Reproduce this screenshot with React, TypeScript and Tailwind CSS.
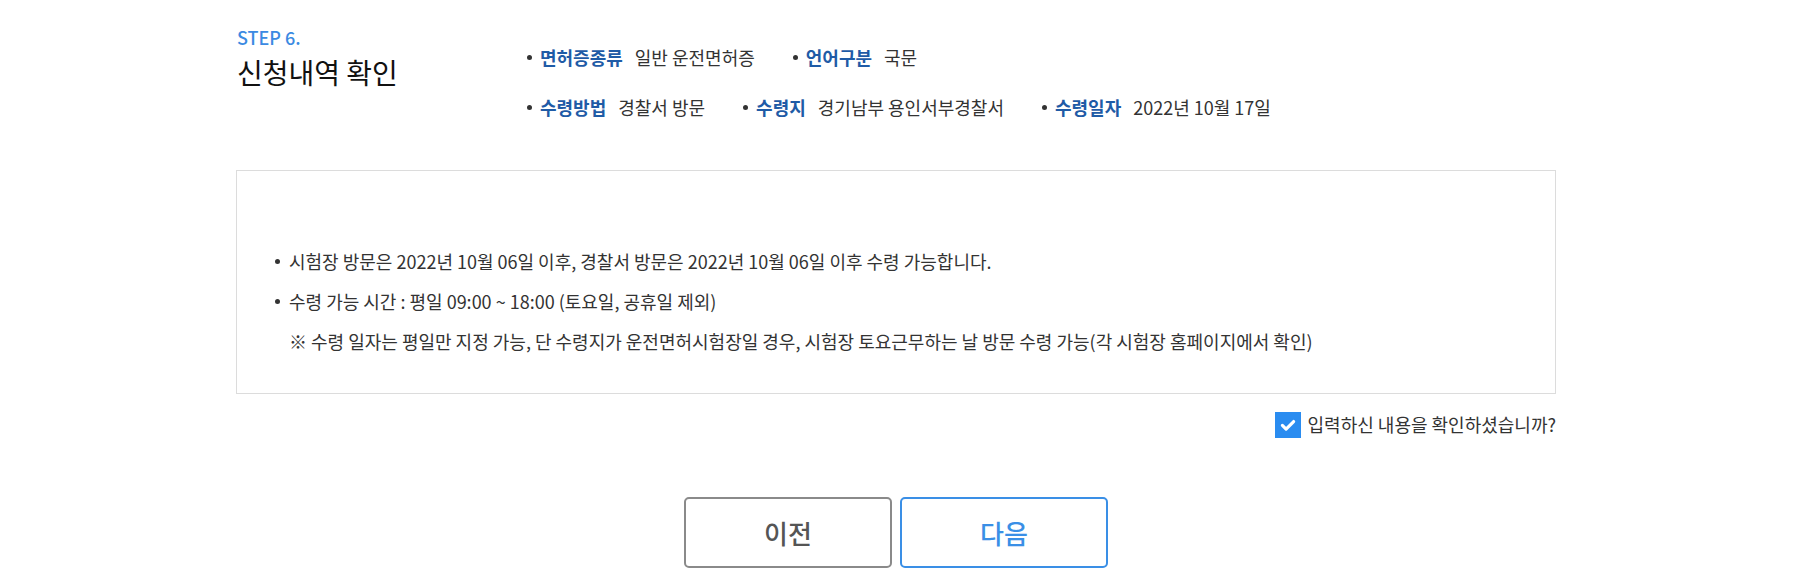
import React from 'react';

interface InfoItem {
  label: string;
  value: string;
}

const rowOne: InfoItem[] = [
  { label: '면허증종류', value: '일반 운전면허증' },
  { label: '언어구분', value: '국문' },
];

const rowTwo: InfoItem[] = [
  { label: '수령방법', value: '경찰서 방문' },
  { label: '수령지', value: '경기남부 용인서부경찰서' },
  { label: '수령일자', value: '2022년 10월 17일' },
];

const InfoRow: React.FC<{ items: InfoItem[] }> = ({ items }) => (
  <div className="flex items-center gap-[38px] h-[24px]">
    {items.map((item) => (
      <div key={item.label} className="flex items-center">
        <span className="w-[5px] h-[5px] rounded-full bg-[#333] mr-[8px]" aria-hidden="true" />
        <span className="font-bold text-[#1f5ba6] mr-[12px]">{item.label}</span>
        <span className="text-[#333]">{item.value}</span>
      </div>
    ))}
  </div>
);

const Dot: React.FC = () => (
  <span className="w-[5px] h-[5px] rounded-full bg-[#333] mr-[9px] flex-shrink-0" aria-hidden="true" />
);

export default function App() {
  return (
    <div
      className="w-full min-h-[585px] bg-white text-[18px]"
      style={{ fontFamily: '"Noto Sans CJK KR", "Noto Sans", sans-serif' }}
    >
      <div className="ml-[236px] w-[1320px]">
        {/* Step header + summary */}
        <div className="flex items-start">
          <div className="w-[291px] pl-[1px] pt-[24px]">
            <p className="text-[18px] leading-[26px] font-medium text-[#3b8ae2]">STEP 6.</p>
            <h2 className="mt-[4px] text-[28px] leading-[36px] text-[#111]">신청내역 확인</h2>
          </div>
          <div className="pt-[45px] flex flex-col gap-[26px]">
            <InfoRow items={rowOne} />
            <InfoRow items={rowTwo} />
          </div>
        </div>

        {/* Notice box */}
        <div className="mt-[51px] h-[224px] border border-[#dcdcdc] pt-[70px] pl-[38px] text-[#333]">
          <ul>
            <li className="flex items-center h-[40px]">
              <Dot />
              시험장 방문은 2022년 10월 06일 이후, 경찰서 방문은 2022년 10월 06일 이후 수령 가능합니다.
            </li>
            <li className="flex items-center h-[40px]">
              <Dot />
              수령 가능 시간 : 평일 09:00 ~ 18:00 (토요일, 공휴일 제외)
            </li>
          </ul>
          <p className="h-[40px] flex items-center pl-[14px]">
            ※ 수령 일자는 평일만 지정 가능, 단 수령지가 운전면허시험장일 경우, 시험장 토요근무하는 날 방문 수령 가능(각 시험장 홈페이지에서 확인)
          </p>
        </div>

        {/* Confirm checkbox */}
        <div className="mt-[17px] flex items-center justify-end">
          <label className="flex items-center gap-[7px] cursor-pointer">
            <span className="w-[26px] h-[26px] bg-[#2a8cf0] flex items-center justify-center">
              <svg width="18" height="18" viewBox="0 0 16 16" fill="none">
                <path d="M3 8.3l3.3 3.3L13 4.9" stroke="#fff" strokeWidth="2.8" strokeLinecap="round" strokeLinejoin="round" />
              </svg>
            </span>
            <span className="text-[#333]">입력하신 내용을 확인하셨습니까?</span>
          </label>
        </div>

        {/* Buttons */}
        <div className="mt-[59px] flex justify-center gap-[8px]">
          <button className="w-[208px] h-[71px] border-2 border-[#8a8a8a] rounded-[5px] text-[26px] font-medium text-[#555]">
            이전
          </button>
          <button className="w-[208px] h-[71px] border-2 border-[#3a8fe6] rounded-[5px] text-[26px] font-medium text-[#3a8fe6]">
            다음
          </button>
        </div>
      </div>
    </div>
  );
}
